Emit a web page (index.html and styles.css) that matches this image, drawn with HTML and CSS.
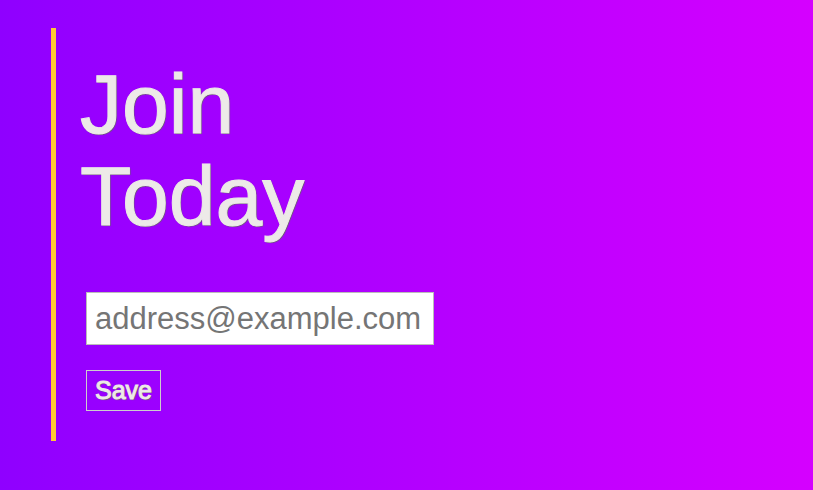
FILE: index.html
```html
<!DOCTYPE html>
<html lang="en">
<head>
<meta charset="utf-8">
<meta name="viewport" content="width=device-width, initial-scale=1">
<title>Join Today</title>
<link rel="stylesheet" href="styles.css">
</head>
<body>
<main class="signup">
<h1 class="signup-title">Join<br>Today</h1>
<form class="signup-form">
<input class="signup-email" type="email" aria-label="Email address" placeholder="address@example.com">
<button class="signup-save" type="submit">Save</button>
</form>
</main>
</body>
</html>
```
FILE: styles.css
```css
* {
  box-sizing: border-box;
}

body {
  margin: 0;
  min-height: 100vh;
  padding: 28px 51px 48px;
  font-family: "Liberation Sans", Arial, sans-serif;
  background: linear-gradient(to right, #8f00ff, #d500ff);
}

.signup {
  border-left: 5px solid #ffcb33;
  padding: 30px 24px;
}

.signup-title {
  margin: 0;
  font-size: 84px;
  font-weight: 400;
  line-height: 92px;
  color: #edeae8;
  -webkit-text-stroke: 1px #edeae8;
  text-shadow: 1px 1px 1px #666;
}

.signup-form {
  display: flex;
  flex-direction: column;
  align-items: flex-start;
  gap: 25px;
  margin-top: 50px;
  padding-left: 6px;
}

.signup-email {
  width: 348px;
  max-width: 100%;
  padding: 8px;
  border: 1px solid #bbb;
  border-radius: 0;
  font: 32px/35px "Liberation Sans", Arial, sans-serif;
  font-size: 31px;
  color: #333;
  background: #fff;
}

.signup-email::placeholder {
  color: #757575;
}

.signup-save {
  padding: 4px 8px;
  border: 1px solid #ccc;
  font: 25px/31px "Liberation Sans", Arial, sans-serif;
  color: #edeae8;
  -webkit-text-stroke: 1px #edeae8;
  text-shadow: 1px 1px 1px #666;
  background: transparent;
}
```
